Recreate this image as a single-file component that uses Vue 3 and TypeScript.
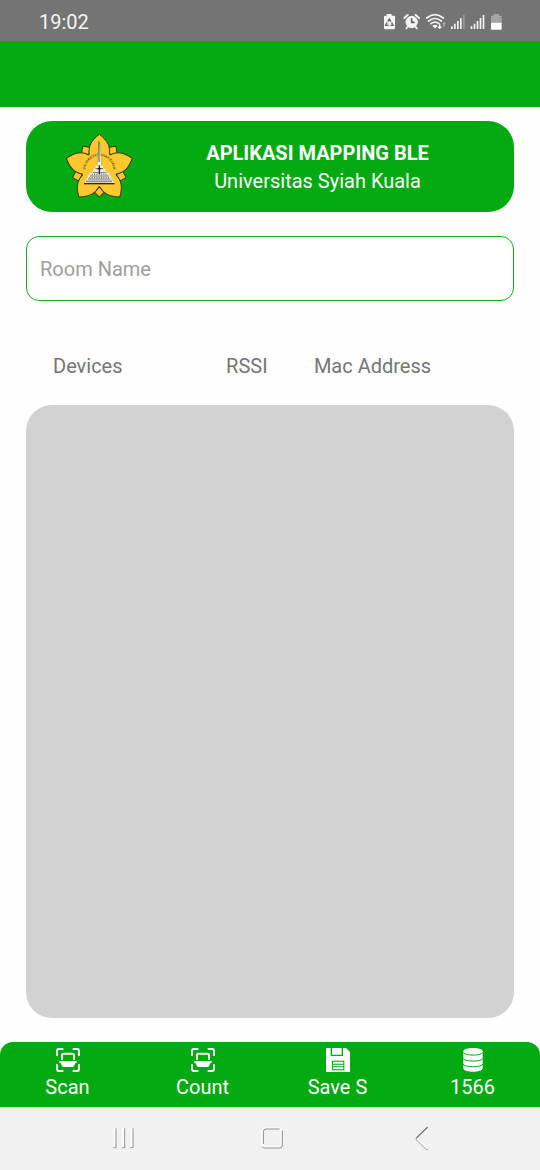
<script setup lang="ts">
import { ref } from 'vue'

type IconName = 'scan' | 'save' | 'database'

interface Action {
  id: string
  label: string
  icon: IconName
}

const roomName = ref('')
const columns: string[] = ['Devices', 'RSSI', 'Mac Address']
const actions: Action[] = [
  { id: 'scan', label: 'Scan', icon: 'scan' },
  { id: 'count', label: 'Count', icon: 'scan' },
  { id: 'save', label: 'Save S', icon: 'save' },
  { id: 'total', label: '1566', icon: 'database' },
]
const petals: number[] = [0, 72, 144, 216, 288]
</script>

<template>
  <div class="screen">
    <div class="status">
      <time>19:02</time>
      <svg class="status-icons" viewBox="36 36 366 54" aria-hidden="true">
        <path d="M50 39h15v5h7q3 0 3 3v34q0 4-4 4H46q-4 0-4-4V47q0-3 3-3h5z" fill="#f4f4f4" />
        <path d="M53 62l5-8 5 8M65 65l4 8h-8M56 73h-9l4-8" fill="none" stroke="#666" stroke-width="4" />
        <g fill="none" stroke="#f4f4f4">
          <circle cx="125" cy="63" r="17" fill="#f4f4f4" stroke-width="3" />
          <path d="M103 51l10-9M147 51l-10-9" stroke-width="6" stroke-linecap="round" />
          <path d="M114 77l-5 5M136 77l5 5" stroke-width="5" stroke-linecap="round" />
          <path d="M125 52v12h9" stroke="#666" stroke-width="5" />
        </g>
        <g fill="none" stroke="#f4f4f4" stroke-width="5" stroke-linecap="round">
          <path d="M170 51q25-20 50 0M176 60q19-15 38 0M183 68q12-9 24 0" />
          <path d="M191 75q4-3 8 0l-4 4z" fill="#f4f4f4" />
          <path d="M209 70v12m-4-4l4 4 4-4" stroke-width="4" />
        </g>
        <path d="M222 78V66m-4 4l4-4 4 4" fill="none" stroke="#aaa" stroke-width="4" />
        <g fill="#f4f4f4">
          <path d="M243 76h5v8h-5zM252 68h5v16h-5zM261 60h5v24h-5z" />
          <path d="M270 51h5v33h-5z" />
          <path d="M279 42h5v42h-5z" fill="#999" />
          <path d="M302 76h5v8h-5zM311 68h5v16h-5zM320 60h5v24h-5zM329 51h5v33h-5zM338 42h5v42h-5z" />
        </g>
        <path d="M371 39h16v5h8v21h-32V44h8z" fill="#a5a5a5" />
        <path d="M363 65h32v18q0 3-3 3h-26q-3 0-3-3z" fill="#fff" />
      </svg>
    </div>
    <div class="app-bar"></div>

    <main class="content">
      <header class="banner">
        <svg class="emblem" viewBox="30 25 204 204" role="img" aria-label="Universitas Syiah Kuala">
          <g stroke="#3a3c08" stroke-width="3" stroke-linejoin="round" fill="#fdc82f">
            <rect
              v-for="angle in petals"
              :key="`leaf-${angle}`"
              x="122"
              y="191"
              width="22"
              height="22"
              rx="3"
              :transform="`rotate(${angle} 133 133) rotate(45 133 202)`"
            />
            <path
              v-for="angle in petals"
              :key="`petal-${angle}`"
              d="M103 92C99 65 108 48 133 29C158 48 167 65 163 92"
              :transform="`rotate(${angle} 133 133)`"
            />
          </g>
          <circle cx="133" cy="133" r="52" fill="#fdc82f" />
          <path id="emblem-arc" d="M95 154A42 42 0 1 1 171 154" fill="none" />
          <text class="emblem-text">
            <textPath href="#emblem-arc" startOffset="50%" text-anchor="middle">UNIVERSITAS SYIAH KUALA</textPath>
          </text>
          <path d="M128 88h10v30h-10z" fill="#fdc82f" />
          <path d="M131 58h4l4 66h-12z" fill="#fff" stroke="#8a7a48" stroke-width="1" />
          <path d="M132 50v62" stroke="#4a4026" stroke-width="3" />
          <path d="M122 123h22v9h8v12h9l17 32H88l17-32h9v-12h8z" fill="#eceadf" />
          <path d="M122 132h22M114 144h38M105 154h56M99 163h68" stroke="#3c3c3c" stroke-width="2" />
          <path d="M110 149h46M103 159h60" stroke="#777" stroke-width="4" stroke-dasharray="3 4" />
          <path d="M94 170h78" stroke="#666" stroke-width="5" stroke-dasharray="4 2" />
          <path d="M133 122v26M127 132h12" stroke="#292929" stroke-width="4" />
          <path d="M87 177h92" stroke="#302a12" stroke-width="4" />
        </svg>
        <div class="titles">
          <h1>APLIKASI MAPPING BLE</h1>
          <p>Universitas Syiah Kuala</p>
        </div>
      </header>

      <input v-model="roomName" class="room" type="text" placeholder="Room Name" aria-label="Room Name" />

      <table class="columns">
        <thead>
          <tr>
            <th v-for="column in columns" :key="column" scope="col">{{ column }}</th>
          </tr>
        </thead>
      </table>
      <section class="results" aria-label="Devices"></section>
    </main>

    <nav class="actions">
      <button v-for="action in actions" :key="action.id" type="button">
        <svg v-if="action.icon === 'scan'" viewBox="0 0 72 72" aria-hidden="true">
          <g fill="none" stroke="#fff" stroke-width="6">
            <path d="M3 23V9q0-6 6-6h13M50 3h13q6 0 6 6v14M69 49v14q0 6-6 6H50M22 69H9q-6 0-6-6V49" />
            <path d="M18 36V22q0-5 5-5h26q5 0 5 5v14" />
          </g>
          <path d="M10 39h52v5h-3l-5 10q-1 3-5 3H23q-4 0-5-3l-5-10h-3z" fill="#fff" />
        </svg>
        <svg v-else-if="action.icon === 'save'" viewBox="0 0 72 72" aria-hidden="true">
          <path d="M0 0h60l12 12v60H0z" fill="#fff" />
          <path d="M14 0v24h37V0h-4v20H18V0z" fill="#02aa12" />
          <path d="M18 38h37v29H18z" fill="#02aa12" />
          <path d="M21 41h31v6H21zM21 50h31v5H21zM21 58h31v6H21z" fill="#fff" />
        </svg>
        <svg v-else viewBox="0 0 72 72" aria-hidden="true">
          <path d="M7 10C7-3 65-3 65 10v51C65 75 7 75 7 61z" fill="#fff" />
          <path d="M6 13c4 11 56 11 60 0M6 31c4 11 56 11 60 0M6 48c4 11 56 11 60 0" fill="none" stroke="#02aa12" stroke-width="3" />
        </svg>
        <span>{{ action.label }}</span>
      </button>
    </nav>

    <nav class="system">
      <button type="button" aria-label="Recent apps">
        <svg viewBox="0 0 96 78" fill="none">
          <path d="M23 10v58M49 10v58M74 10v58" stroke="#fff" stroke-width="6" />
          <path d="M27 10v58h-8M53 10v58h-8M78 10v58h-8" stroke="#939393" stroke-width="3" />
        </svg>
      </button>
      <button type="button" aria-label="Home">
        <svg viewBox="0 0 96 78" fill="none">
          <rect x="19" y="11" width="58" height="56" rx="9" stroke="#fff" stroke-width="7" />
          <path d="M22 57V20q0-8 8-8h41" stroke="#888" stroke-width="3" />
          <path d="M79 16v44q0 9-9 9H28q-7 0-10-5" stroke="#8c8c8c" stroke-width="3" />
        </svg>
      </button>
      <button type="button" aria-label="Back">
        <svg viewBox="0 0 96 78" fill="none">
          <path d="M67 6L32 40l34 31" stroke="#fff" stroke-width="6" />
          <path d="M68 6L33 40" stroke="#777" stroke-width="4" />
          <path d="M31 41l33 33h5" stroke="#999" stroke-width="3" />
        </svg>
      </button>
    </nav>
  </div>
</template>

<style>
body {
  margin: 0;
}
</style>

<style scoped>
.screen {
  display: flex;
  flex-direction: column;
  min-height: 100vh;
  background: #fefefe;
  font-family: Roboto, 'Liberation Sans', sans-serif;
  font-size: 20px;
  line-height: 28px;
}
.screen * {
  box-sizing: border-box;
}
button {
  padding: 0;
  border: 0;
  background: none;
  color: inherit;
  font: inherit;
}
.status {
  display: flex;
  align-items: center;
  justify-content: space-between;
  height: 41px;
  padding: 2px 36px 0 39px;
  background: #747474;
  color: #f4f4f4;
}
.status-icons {
  width: 122px;
  height: 18px;
}
.app-bar {
  height: 66px;
  background: #02aa12;
}
.content {
  display: flex;
  flex: 1;
  flex-direction: column;
  padding: 14px 26px 24px;
}
.banner {
  display: flex;
  align-items: center;
  height: 91px;
  padding: 0 39px;
  border-radius: 26px;
  background: #02aa12;
  color: #fff;
}
.emblem {
  width: 68px;
  height: 68px;
}
.emblem-text {
  fill: #453a08;
  font-size: 10px;
  font-weight: 500;
}
.titles {
  flex: 1;
  padding-left: 27px;
  text-align: center;
}
h1,
p {
  margin: 0;
  font-size: 20px;
  line-height: 28px;
}
.room {
  width: 100%;
  height: 65px;
  margin-top: 24px;
  padding: 0 13px;
  border: 1px solid #14ab2a;
  border-radius: 13px;
  background: #fff;
  color: #444;
  font: inherit;
}
.room::placeholder {
  color: #9e9e9e;
  opacity: 1;
}
.columns {
  width: 100%;
  margin: 51px 0 25px;
  border-collapse: collapse;
  table-layout: fixed;
  color: #757575;
}
.columns th {
  padding: 0;
  font-weight: 400;
  text-align: left;
}
.columns th:nth-child(1) {
  width: 41%;
  padding-left: 27px;
}
.columns th:nth-child(2) {
  width: 18%;
}
.results {
  flex: 1;
  border-radius: 26px;
  background: #d2d2d2;
}
.actions {
  display: grid;
  grid-template-columns: repeat(4, 1fr);
  height: 65px;
  border-radius: 13px 13px 0 0;
  background: #02aa12;
  color: #fff;
}
.actions button {
  display: flex;
  flex-direction: column;
  align-items: center;
  padding-top: 6px;
}
.actions svg {
  width: 24px;
  height: 24px;
}
.actions span {
  margin-top: 1px;
}
.system {
  display: grid;
  grid-template-columns: repeat(3, 1fr);
  height: 63px;
  padding: 0 44px 2px 48px;
  background: #f1f1f1;
}
.system button {
  display: flex;
  align-items: center;
  justify-content: center;
}
.system svg {
  width: 32px;
  height: 26px;
}
</style>
